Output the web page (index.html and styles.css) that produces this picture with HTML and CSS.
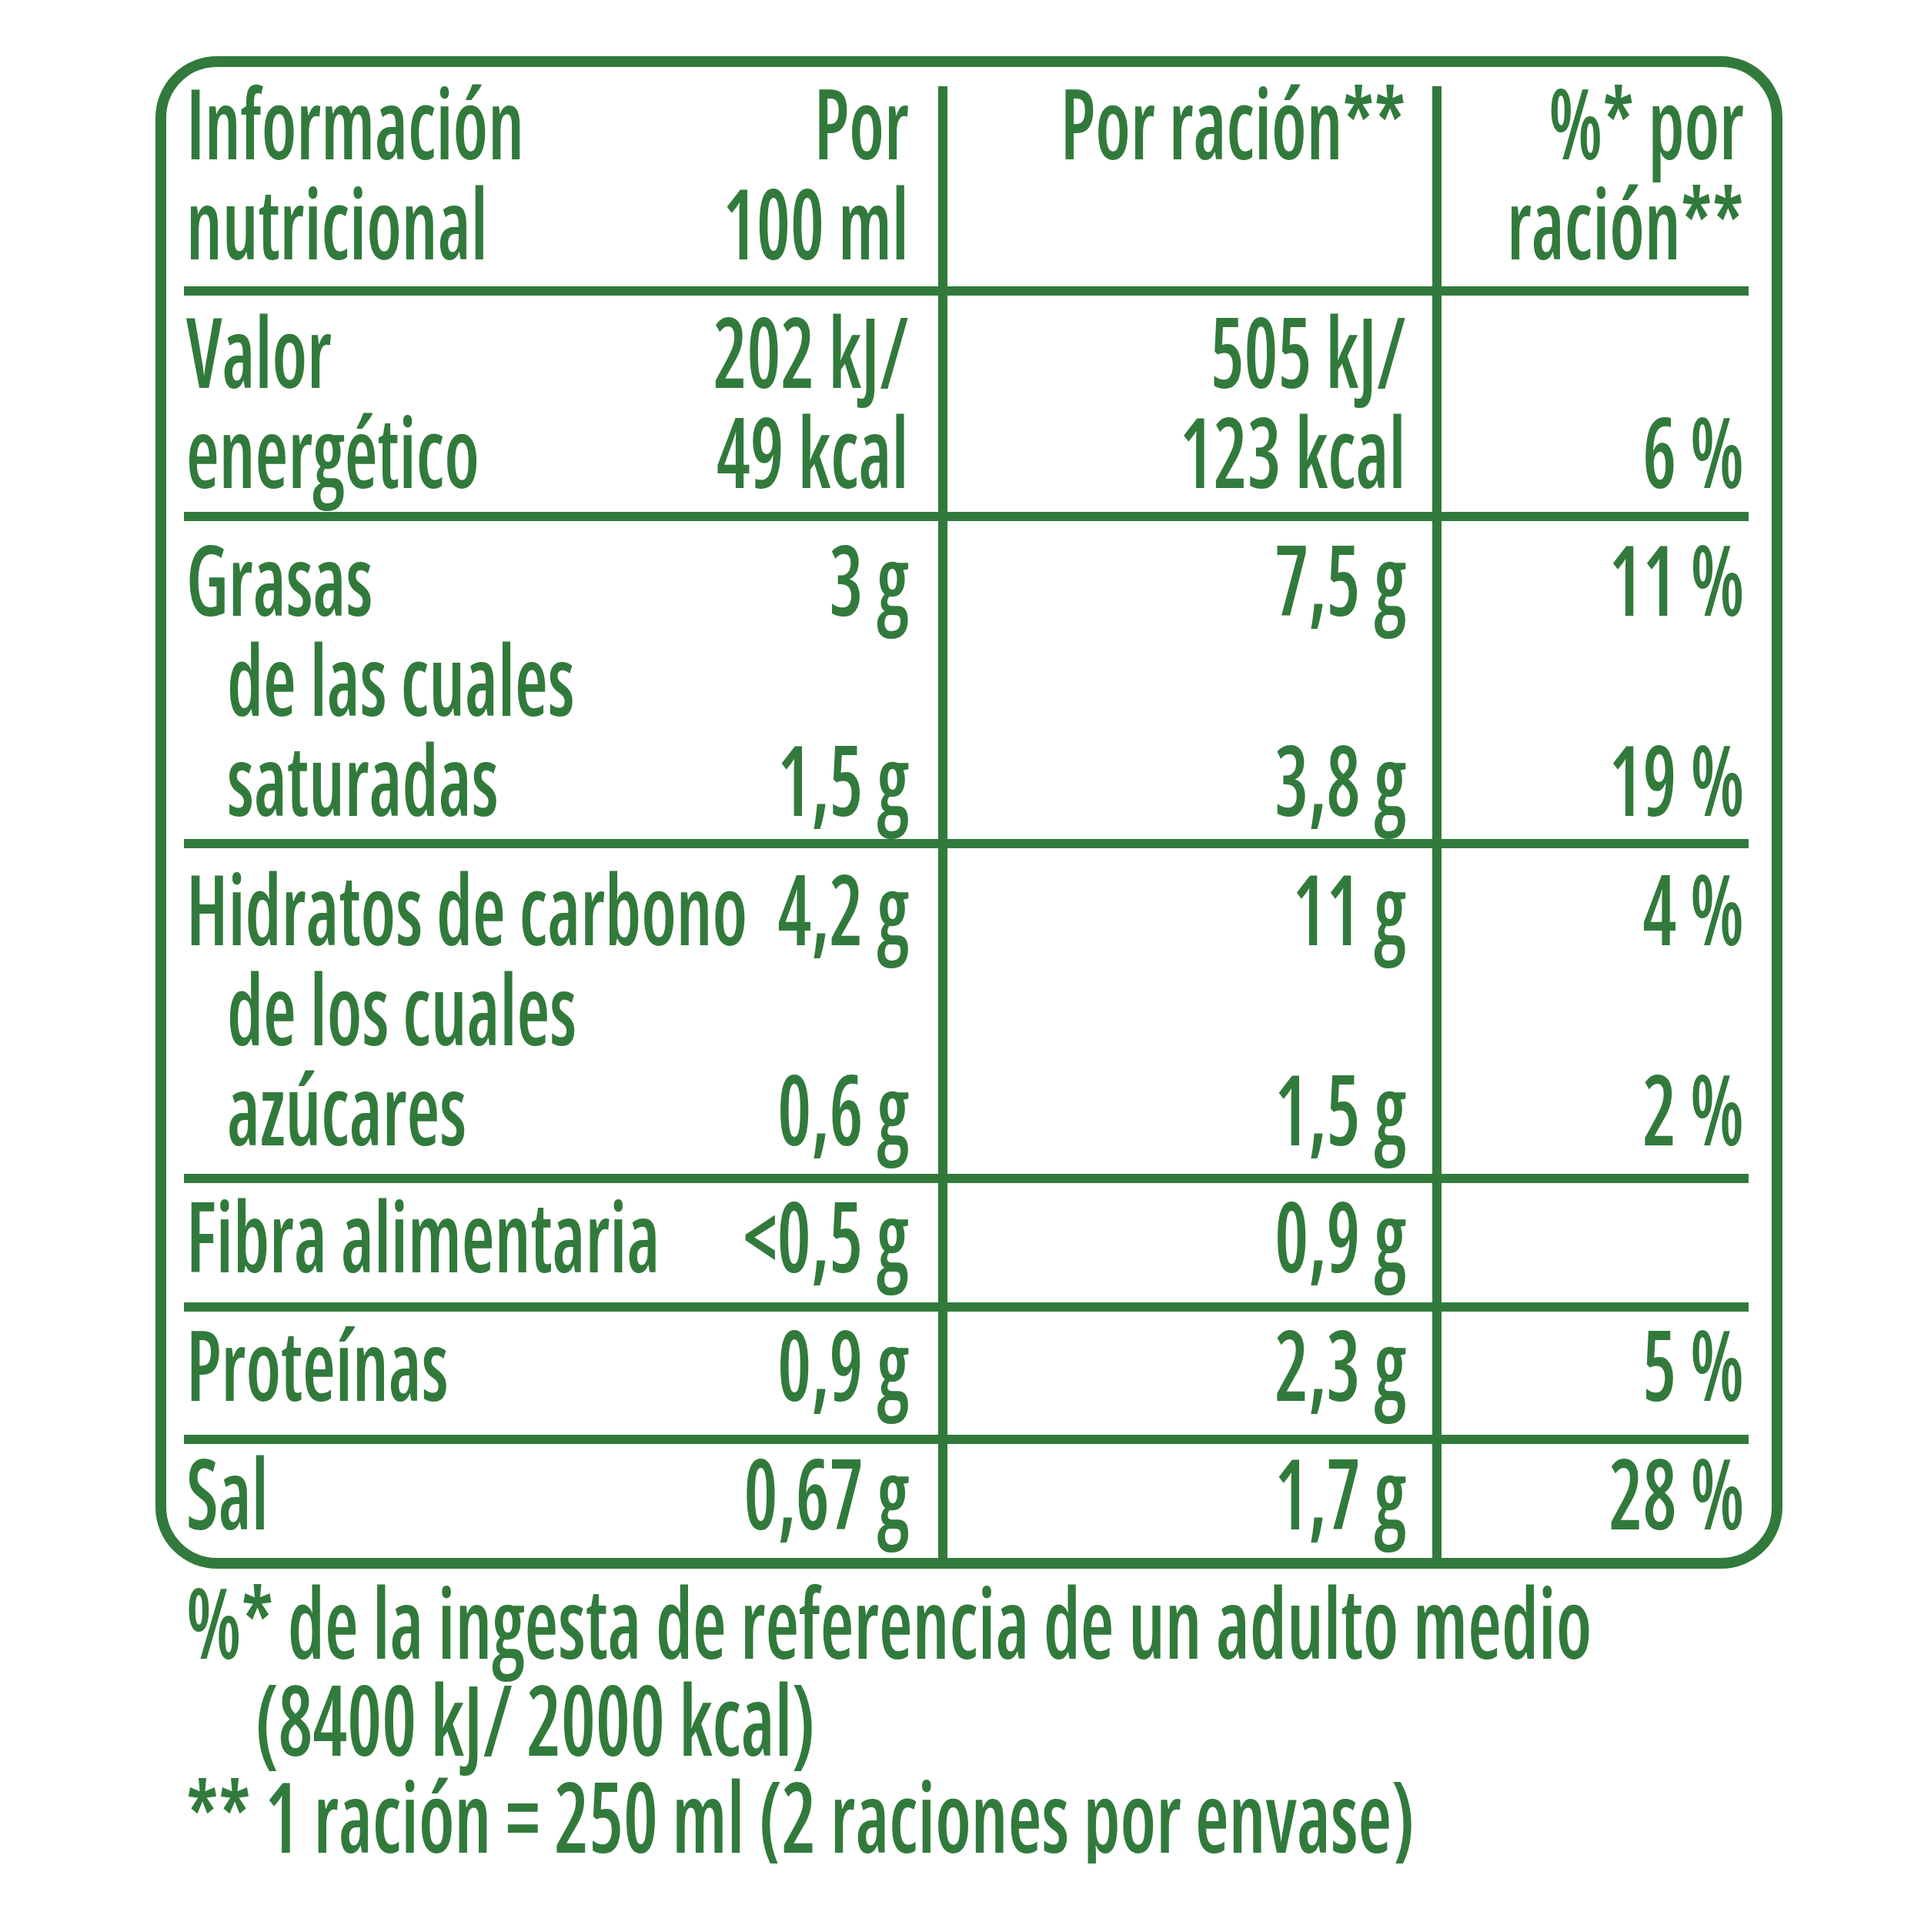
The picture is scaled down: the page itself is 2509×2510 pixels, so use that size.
FILE: index.html
```html
<!DOCTYPE html>
<html lang="es">
<head>
<meta charset="utf-8">
<title>Información nutricional</title>
<link rel="stylesheet" href="styles.css">
</head>
<body>
<div class="page">
  <div class="panel">
    <div class="row head">
      <div class="cell c1">
        <div class="txt lab">Información<br>nutricional</div>
        <div class="txt val">Por<br>100 ml</div>
      </div>
      <div class="cell c2"><div class="txt">Por ración**</div></div>
      <div class="cell c3"><div class="txt">%* por<br>ración**</div></div>
    </div>

    <div class="row r-valor">
      <div class="cell c1">
        <div class="txt lab">Valor<br>energético</div>
        <div class="txt val">202 kJ/<br>49 kcal</div>
      </div>
      <div class="cell c2"><div class="txt">505 kJ/<br>123 kcal</div></div>
      <div class="cell c3"><div class="txt"><br>6 %</div></div>
    </div>

    <div class="row r-grasas">
      <div class="cell c1">
        <div class="txt lab"><div>Grasas</div><div class="sub">de las cuales</div><div class="sub">saturadas</div></div>
        <div class="txt val">3 g<br><br>1,5 g</div>
      </div>
      <div class="cell c2"><div class="txt">7,5 g<br><br>3,8 g</div></div>
      <div class="cell c3"><div class="txt">11 %<br><br>19 %</div></div>
    </div>

    <div class="row r-hidr">
      <div class="cell c1">
        <div class="txt lab"><div>Hidratos de carbono</div><div class="sub">de los cuales</div><div class="sub">azúcares</div></div>
        <div class="txt val">4,2 g<br><br>0,6 g</div>
      </div>
      <div class="cell c2"><div class="txt">11 g<br><br>1,5 g</div></div>
      <div class="cell c3"><div class="txt">4 %<br><br>2 %</div></div>
    </div>

    <div class="row r-fibra">
      <div class="cell c1">
        <div class="txt lab">Fibra alimentaria</div>
        <div class="txt val">&lt;0,5 g</div>
      </div>
      <div class="cell c2"><div class="txt">0,9 g</div></div>
      <div class="cell c3"><div class="txt"><br></div></div>
    </div>

    <div class="row r-prot">
      <div class="cell c1">
        <div class="txt lab">Proteínas</div>
        <div class="txt val">0,9 g</div>
      </div>
      <div class="cell c2"><div class="txt">2,3 g</div></div>
      <div class="cell c3"><div class="txt">5 %</div></div>
    </div>

    <div class="row r-sal">
      <div class="cell c1">
        <div class="txt lab">Sal</div>
        <div class="txt val">0,67 g</div>
      </div>
      <div class="cell c2"><div class="txt">1,7 g</div></div>
      <div class="cell c3"><div class="txt">28 %</div></div>
    </div>
  </div>

  <div class="foot">
    <div class="txt">%* de la ingesta de referencia de un adulto medio</div>
    <div class="txt ind">(8400 kJ/ 2000 kcal)</div>
    <div class="txt">** 1 ración = 250 ml (2 raciones por envase)</div>
  </div>
</div>
</body>
</html>
```
FILE: styles.css
```css
:root {
  --green: #317a3c;
}

html, body {
  margin: 0;
  background: #ffffff;
}

body {
  font-family: "Open Sans", "Noto Sans", sans-serif;
  font-stretch: 75%;
  font-weight: 600;
  font-size: 126px;
  line-height: 130px;
  color: var(--green);
}

.page {
  padding: 73px 0 0 202px;
}

.panel {
  box-sizing: content-box;
  width: 2033px;
  border: 14px solid var(--green);
  border-radius: 80px;
  padding: 0 30px 0 23px;
}

.row {
  display: grid;
  grid-template-columns: 980px 642px 411px;
  border-bottom: 12px solid var(--green);
}

.row.r-sal {
  border-bottom: 0;
}

.cell {
  display: flex;
  white-space: nowrap;
}

.c1 {
  justify-content: space-between;
  padding-left: 3px;
  padding-right: 38px;
}

.c2,
.c3 {
  justify-content: flex-end;
  border-left: 12px solid var(--green);
}

.c2 {
  padding-right: 34px;
}

.c3 {
  padding-right: 6px;
}

.txt {
  transform: scaleX(0.78);
}

.lab {
  flex: 1 1 0;
  min-width: 0;
  transform-origin: left center;
}

.val,
.c2 .txt,
.c3 .txt {
  flex: none;
  text-align: right;
  transform-origin: right center;
}

.sub {
  padding-left: 68px;
}

/* row spacing */
.head {
  padding-top: 25px;
}
.head .cell {
  padding-bottom: 19px;
}
.head .txt {
  margin-top: -19px;
}

.r-valor .cell {
  padding-top: 6px;
  padding-bottom: 15px;
}

.r-grasas .cell {
  padding-top: 9px;
  padding-bottom: 14px;
}

.r-hidr .cell {
  padding-top: 12px;
  padding-bottom: 21px;
}

.r-fibra .cell {
  padding-top: 2px;
  padding-bottom: 23px;
}

.r-prot .cell {
  padding-top: 2px;
  padding-bottom: 28px;
}

.r-sal .cell {
  padding-bottom: 21px;
}
.r-sal .txt {
  margin-top: -3px;
}

/* footnotes */
.foot {
  margin-top: 5px;
  padding-left: 40px;
  line-height: 126px;
  white-space: nowrap;
}

.foot .txt {
  transform: scaleX(0.797);
  transform-origin: left center;
}

.foot .ind {
  padding-left: 112px;
}
```
